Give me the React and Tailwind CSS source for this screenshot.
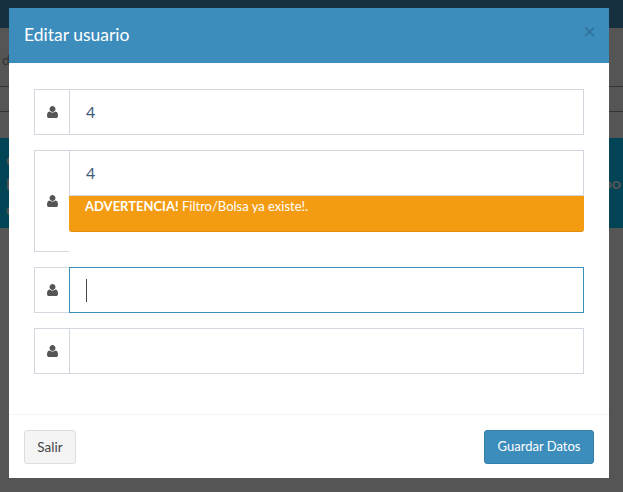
import React from 'react';

const UserIcon = () => (
    <svg viewBox="0 128 1408 1536" className="w-[11px] h-[12px] fill-[#555555]">
        <path d="M1408 1405q0 120-73 189.500t-194 69.500h-874q-121 0-194-69.500t-73-189.500q0-53 3.500-103.500t14-109 26.500-108.500 43-97.500 62-81 85.500-53.500 111.500-20q9 0 42 21.500t74.500 48 108 48 133.500 21.500 133.500-21.500 108-48 74.500-48 42-21.500q61 0 111.500 20t85.500 53.500 62 81 43 97.500 26.500 108.500 14 109 3.500 103.500zM1088 512q0 159-112.500 271.500t-271.500 112.500-271.500-112.500-112.500-271.500 112.500-271.500 271.500-112.500 271.500 112.500 112.500 271.500z" />
    </svg>
);

const Addon = ({ className = '' }) => (
    <div className={`w-[35px] shrink-0 flex items-center justify-center border border-[#d2d6de] bg-white ${className}`}>
        <UserIcon />
    </div>
);

const InputRow = ({ value, focused }) => (
    <div className="flex h-[46px] mb-[15px]">
        <Addon className="border-r-0" />
        <div className={`flex-1 flex items-center pl-[16px] border text-[16px] text-[#3c5a78] ${focused ? 'border-[#3c8dbc]' : 'border-[#d2d6de]'}`}>
            {focused ? <div className="w-px h-[23px] bg-[#444444]" /> : value}
        </div>
    </div>
);

const App = () => {
    return (
        <div className="relative w-[623px] h-[492px] overflow-hidden bg-[#555556] font-['Lato',sans-serif]">
            {/* Page behind the modal */}
            <div className="h-[28px] bg-[#16303f]" />
            <div className="h-[110px] pt-[24px] text-[#333333] text-[14px]">
                <div className="h-[34px] leading-[16px] pl-[2px]">d</div>
                <div className="h-[25px] border-t border-[#333333]" />
                <div className="border-t border-[#333333]" />
            </div>
            <div className="h-[90px] bg-[#004455] flex justify-between font-bold text-[#555556] text-[16px]">
                <div className="flex flex-col pt-[8px] pl-[6px] leading-[25px]">
                    <span>c</span>
                    <span>l</span>
                    <span>c</span>
                </div>
                <div className="self-center pr-[2px]">po</div>
            </div>

            {/* Modal */}
            <div className="absolute left-[9px] top-[8px] w-[600px] h-[470px] bg-white flex flex-col">
                <div className="h-[55px] shrink-0 bg-[#3c8dbc] flex items-center justify-between pl-[15px] pr-[13px]">
                    <h4 className="text-[17.5px] text-white">Editar usuario</h4>
                    <span className="text-[#2f6f96] text-[22px] leading-none mb-[9px]">×</span>
                </div>

                <div className="flex-1 pt-[26px] px-[25px]">
                    <InputRow value="4" />

                    <div className="flex h-[102px] mb-[15px]">
                        <Addon className="border-r-0" />
                        <div className="flex-1 flex flex-col">
                            <div className="h-[46px] flex items-center pl-[16px] border border-[#d2d6de] text-[16px] text-[#3c5a78]">4</div>
                            <div className="h-[36px] bg-[#f39c12] border-b border-b-[#e08e0b] rounded-b-[3px] pl-[16px] text-[13px] leading-[20px] text-white">
                                <b>ADVERTENCIA!</b> Filtro/Bolsa ya existe!.
                            </div>
                        </div>
                    </div>

                    <InputRow focused />
                    <InputRow value="" />
                </div>

                <div className="h-[64px] shrink-0 border-t border-[#f4f4f4] flex items-start justify-between pt-[15px] px-[15px]">
                    <button className="h-[34px] w-[52px] bg-[#f4f4f4] border border-[#dddddd] rounded-[3px] text-[13.5px] text-[#444444]">Salir</button>
                    <button className="h-[34px] w-[110px] bg-[#3c8dbc] border border-[#367fa9] rounded-[3px] text-[13px] text-white">Guardar Datos</button>
                </div>
            </div>
        </div>
    );
};

export default App;
